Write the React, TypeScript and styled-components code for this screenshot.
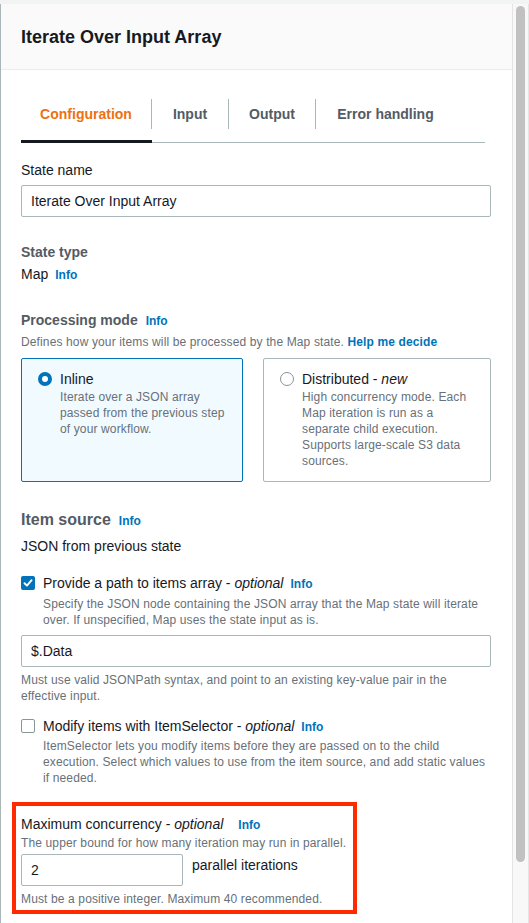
import React from "react";
import styled, { createGlobalStyle } from "styled-components";

const Global = createGlobalStyle`
  html, body { margin: 0; padding: 0; }
  body {
    background: #f2f3f3;
    font-family: "Liberation Sans", Arial, sans-serif;
    color: #16191f;
    width: 529px;
    height: 923px;
    overflow: hidden;
  }
  * { box-sizing: border-box; }
`;

const Frame = styled.div`
  display: flex;
  padding-top: 4px;
  height: 923px;
`;

const Panel = styled.div`
  width: 512px;
  background: #ffffff;
  border-left: 1px solid #aab7b8;
  display: flex;
  flex-direction: column;
`;

const ScrollTrack = styled.div`
  width: 17px;
  background: #f8f8f8;
  border-left: 1px solid #e4e4e4;
  border-right: 1px solid #e4e4e4;
  padding: 2px 3px 0 3px;
`;

const ScrollThumb = styled.div`
  height: 856px;
  border-radius: 5px;
  background: #c1c1c1;
`;

const Header = styled.div`
  height: 66px;
  background: #fafafa;
  border-bottom: 1px solid #eaeded;
  display: flex;
  align-items: center;
  padding: 2px 0 0 20px;
  font-size: 18px;
  font-weight: 700;
  color: #16191f;
`;

const Body = styled.div`
  padding: 29px 20px 0 20px;
  display: flex;
  flex-direction: column;
`;

const TabList = styled.div`
  display: flex;
  width: 464px;
  border-bottom: 1px solid #aab7b8;
  margin-bottom: 17px;
`;

const Tab = styled.div`
  position: relative;
  height: 43px;
  display: flex;
  align-items: flex-start;
`;

const TabLabel = styled.div<{ $active?: boolean; $last?: boolean; $w: number }>`
  width: ${(p) => p.$w}px;
  height: 30px;
  display: flex;
  align-items: center;
  justify-content: center;
  font-size: 14px;
  font-weight: 700;
  color: ${(p) => (p.$active ? "#ec7211" : "#545b64")};
  border-right: ${(p) => (p.$last ? "none" : "1px solid #aab7b8")};
`;

const ActiveBar = styled.div`
  position: absolute;
  left: 0;
  right: 0;
  bottom: -1px;
  height: 3px;
  background: #16191f;
`;

const Label = styled.div`
  font-size: 14px;
  line-height: 20px;
  color: #16191f;
`;

const Input = styled.div<{ $w?: number }>`
  width: ${(p) => (p.$w ? `${p.$w}px` : "470px")};
  height: 32px;
  border: 1px solid #aab7b8;
  border-radius: 2px;
  display: flex;
  align-items: center;
  padding-left: 9px;
  font-size: 14px;
  color: #16191f;
  background: #fff;
`;

const SectionTitle = styled.div<{ $big?: boolean; $mt?: number }>`
  display: flex;
  align-items: baseline;
  gap: 8px;
  font-size: ${(p) => (p.$big ? "16px" : "14px")};
  line-height: 20px;
  font-weight: 700;
  color: #545b64;
  margin-top: ${(p) => p.$mt ?? 0}px;
`;

const Info = styled.span<{ $ml?: number }>`
  font-size: 12px;
  font-weight: 700;
  color: #0073bb;
  margin-left: ${(p) => p.$ml ?? 0}px;
`;

const Plain = styled.div<{ $mb?: number }>`
  display: flex;
  align-items: baseline;
  gap: 7px;
  font-size: 14px;
  line-height: 20px;
  color: #16191f;
  margin-bottom: ${(p) => p.$mb ?? 0}px;
`;

const Desc = styled.div<{ $mt?: number }>`
  font-size: 12px;
  line-height: 16px;
  letter-spacing: 0.13px;
  color: #687078;
  margin-top: ${(p) => p.$mt ?? 0}px;
`;

const HelpLink = styled.span`
  color: #0073bb;
  font-weight: 700;
`;

const Tiles = styled.div`
  display: grid;
  grid-template-columns: 222px 228px;
  column-gap: 20px;
  margin-top: 8px;
`;

const Tile = styled.div<{ $selected?: boolean }>`
  height: 124px;
  border: 1px solid ${(p) => (p.$selected ? "#0073bb" : "#aab7b8")};
  background: ${(p) => (p.$selected ? "#f1faff" : "#ffffff")};
  border-radius: 2px;
  display: flex;
  gap: 8px;
  padding: 10px 12px 0 16px;
`;

const Radio = styled.div<{ $on?: boolean }>`
  width: 14px;
  height: 14px;
  margin-top: 3px;
  border-radius: 50%;
  flex: none;
  border: ${(p) => (p.$on ? "4px solid #0073bb" : "1px solid #879596")};
  background: #fff;
`;

const TileText = styled.div`
  display: flex;
  flex-direction: column;
`;

const TileTitle = styled.div`
  font-size: 14px;
  line-height: 20px;
  color: #16191f;
`;

const CheckRow = styled.div<{ $mt?: number }>`
  display: flex;
  gap: 8px;
  margin-top: ${(p) => p.$mt ?? 0}px;
`;

const Box = styled.div<{ $on?: boolean }>`
  width: 14px;
  height: 14px;
  margin-top: 3px;
  flex: none;
  border-radius: 2px;
  border: ${(p) => (p.$on ? "none" : "1px solid #879596")};
  background: ${(p) => (p.$on ? "#0073bb" : "#fff")};
  display: flex;
  align-items: center;
  justify-content: center;
`;

const CheckText = styled.div`
  display: flex;
  flex-direction: column;
  max-width: 448px;
`;

const Highlight = styled.div`
  margin: 16px 0 0 -9px;
  width: 345px;
  border: 4px solid #ff2a00;
  padding: 8px 5px 3px 5px;
  display: flex;
  flex-direction: column;
`;

const InlineRow = styled.div`
  display: flex;
  gap: 9px;
  margin-top: 3px;
`;

const Suffix = styled.div`
  font-size: 14px;
  line-height: 20px;
  padding-top: 1px;
  color: #16191f;
`;

const Spacer = styled.div<{ $h: number }>`
  height: ${(p) => p.$h}px;
`;

const CheckIcon = () => (
  <svg width="10" height="10" viewBox="0 0 10 10">
    <path d="M1.5 5.2 L4 7.6 L8.6 2.2" fill="none" stroke="#fff" strokeWidth="1.9" strokeLinecap="round" strokeLinejoin="round" />
  </svg>
);

const tabs = [
  { label: "Configuration", w: 131, active: true },
  { label: "Input", w: 77 },
  { label: "Output", w: 87 },
  { label: "Error handling", w: 139, last: true },
];

export default function App() {
  return (
    <>
      <Global />
      <Frame>
        <Panel>
          <Header>Iterate Over Input Array</Header>
          <Body>
            <TabList>
              {tabs.map((t) => (
                <Tab key={t.label}>
                  <TabLabel $active={t.active} $last={t.last} $w={t.w}>
                    {t.label}
                  </TabLabel>
                  {t.active && <ActiveBar />}
                </Tab>
              ))}
            </TabList>

            <Label>State name</Label>
            <Spacer $h={5} />
            <Input>Iterate Over Input Array</Input>

            <SectionTitle $mt={25}>State type</SectionTitle>
            <Spacer $h={2} />
            <Plain>
              Map <Info>Info</Info>
            </Plain>

            <SectionTitle $mt={25}>
              Processing mode <Info>Info</Info>
            </SectionTitle>
            <Desc $mt={3}>
              Defines how your items will be processed by the Map state. <HelpLink>Help me decide</HelpLink>
            </Desc>
            <Tiles>
              <Tile $selected>
                <Radio $on />
                <TileText>
                  <TileTitle>Inline</TileTitle>
                  <Desc>Iterate over a JSON array passed from the previous step of your workflow.</Desc>
                </TileText>
              </Tile>
              <Tile>
                <Radio />
                <TileText>
                  <TileTitle>
                    Distributed - <i>new</i>
                  </TileTitle>
                  <Desc>High concurrency mode. Each Map iteration is run as a separate child execution. Supports large-scale S3 data sources.</Desc>
                </TileText>
              </Tile>
            </Tiles>

            <SectionTitle $big $mt={28}>
              Item source <Info>Info</Info>
            </SectionTitle>
            <Spacer $h={5} />
            <Plain>JSON from previous state</Plain>

            <CheckRow $mt={17}>
              <Box $on>
                <CheckIcon />
              </Box>
              <CheckText>
                <Plain $mb={2}>
                  <span>
                    Provide a path to items array - <i>optional</i>
                  </span>
                  <Info>Info</Info>
                </Plain>
                <Desc>Specify the JSON node containing the JSON array that the Map state will iterate over. If unspecified, Map uses the state input as is.</Desc>
              </CheckText>
            </CheckRow>
            <Spacer $h={7} />
            <Input>$.Data</Input>
            <Desc $mt={5}>Must use valid JSONPath syntax, and point to an existing key-value pair in the effective input.</Desc>

            <CheckRow $mt={12}>
              <Box />
              <CheckText>
                <Plain $mb={1}>
                  <span>
                    Modify items with ItemSelector - <i>optional</i>
                  </span>
                  <Info>Info</Info>
                </Plain>
                <Desc>ItemSelector lets you modify items before they are passed on to the child execution. Select which values to use from the item source, and add static values if needed.</Desc>
              </CheckText>
            </CheckRow>

            <Highlight>
              <Plain>
                <span>
                  Maximum concurrency - <i>optional</i>
                </span>
                <Info $ml={8}>Info</Info>
              </Plain>
              <Desc>The upper bound for how many iteration may run in parallel.</Desc>
              <InlineRow>
                <Input $w={162}>2</Input>
                <Suffix>parallel iterations</Suffix>
              </InlineRow>
              <Desc $mt={5}>Must be a positive integer. Maximum 40 recommended.</Desc>
            </Highlight>
          </Body>
        </Panel>
        <ScrollTrack>
          <ScrollThumb />
        </ScrollTrack>
      </Frame>
    </>
  );
}
